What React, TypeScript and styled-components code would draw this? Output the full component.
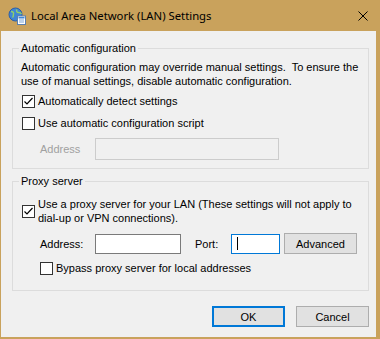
import React from 'react';
import styled, { createGlobalStyle } from 'styled-components';

const GlobalStyle = createGlobalStyle`
  html, body {
    margin: 0;
    padding: 0;
    background: #c9a25c;
  }
  body {
    font-family: "Liberation Sans", Arial, sans-serif;
    font-size: 11px;
    color: #000;
  }
`;

const Window = styled.div`
  width: 380px;
  height: 339px;
  box-sizing: border-box;
  background: #c9a25c;
  padding: 0 4px 2px 1px;
  display: flex;
  flex-direction: column;
`;

const TitleBar = styled.div`
  height: 31px;
  flex: none;
  display: flex;
  align-items: center;
  gap: 5px;
  padding: 0 8px 0 7px;
`;

const Title = styled.div`
  flex: 1;
  font-family: "Noto Sans", "Open Sans", sans-serif;
  font-size: 11.3px;
  line-height: 16px;
  margin-top: 1px;
`;

const Client = styled.div`
  flex: 1;
  background: #f0f0f0;
  padding: 9px 0 0 11px;
  display: flex;
  flex-direction: column;
`;

const GroupBox = styled.fieldset<{ $mt?: number; $pb: number }>`
  width: 357px;
  box-sizing: border-box;
  min-width: 0;
  margin: ${({ $mt }) => $mt || 0}px 0 0 0;
  border: 1px solid #dcdcdc;
  padding: 4px 8px ${({ $pb }) => $pb}px 8px;
`;

const Legend = styled.legend`
  padding: 0 2px;
  margin-left: -2px;
  line-height: 16px;
`;

const Text = styled.div<{ $lh: number }>`
  line-height: ${({ $lh }) => $lh}px;
  white-space: nowrap;
`;

const CheckRow = styled.div<{ $indent: number; $mt: number }>`
  display: flex;
  align-items: center;
  gap: 3px;
  margin: ${({ $mt }) => $mt}px 0 0 ${({ $indent }) => $indent}px;
  line-height: 16px;
`;

const Box = styled.span`
  width: 13px;
  height: 13px;
  box-sizing: border-box;
  flex: none;
  border: 1px solid #333;
  background: #fff;
  display: flex;
  align-items: center;
  justify-content: center;
`;

const FieldRow = styled.div<{ $mt: number }>`
  display: flex;
  align-items: center;
  margin: ${({ $mt }) => $mt}px 0 0 19px;
  line-height: 16px;
`;

const FieldLabel = styled.span<{ $w: number; $ml?: number; $disabled?: boolean }>`
  width: ${({ $w }) => $w}px;
  margin-left: ${({ $ml }) => $ml || 0}px;
  flex: none;
  color: ${({ $disabled }) => ($disabled ? '#a0a0a0' : '#000')};
`;

const Input = styled.div<{ $w: number; $h: number; $state?: 'disabled' | 'focus' }>`
  width: ${({ $w }) => $w}px;
  height: ${({ $h }) => $h}px;
  box-sizing: border-box;
  flex: none;
  background: ${({ $state }) => ($state === 'disabled' ? '#f0f0f0' : '#fff')};
  border: 1px solid
    ${({ $state }) => ($state === 'disabled' ? '#cccccc' : $state === 'focus' ? '#0078d7' : '#7a7a7a')};
  display: flex;
  align-items: center;
  padding-left: 5px;
`;

const Caret = styled.span`
  width: 1px;
  height: 13px;
  background: #000;
`;

const Button = styled.div<{ $default?: boolean; $ml?: number }>`
  width: 73px;
  height: 21px;
  box-sizing: border-box;
  flex: none;
  margin-left: ${({ $ml }) => $ml || 0}px;
  background: #e1e1e1;
  border: ${({ $default }) => ($default ? '2px solid #0078d7' : '1px solid #adadad')};
  display: flex;
  align-items: center;
  justify-content: center;
  line-height: 16px;
`;

const ButtonBar = styled.div`
  width: 357px;
  margin-top: 15px;
  display: flex;
  justify-content: flex-end;
  gap: 11px;
`;

function CheckMark() {
  return (
    <svg width="11" height="11" viewBox="0 0 11 11">
      <polyline points="1.5,5.5 4,8 9.5,2" fill="none" stroke="#000" strokeWidth="1.2" />
    </svg>
  );
}

function Checkbox({ checked, indent, mt, children }: {
  checked?: boolean; indent: number; mt: number; children: React.ReactNode;
}) {
  return (
    <CheckRow $indent={indent} $mt={mt}>
      <Box>{checked && <CheckMark />}</Box>
      <span>{children}</span>
    </CheckRow>
  );
}

function NetIcon() {
  return (
    <svg width="18" height="18" viewBox="0 0 18 18">
      <circle cx="7.5" cy="7.5" r="6.5" fill="#3f86d6" stroke="#2a5fa8" strokeWidth="1" />
      <path d="M3 4.5c2 0 3 1 2.5 2.5S6 9 4.5 10.5M9 2.5c-1 1.5 0 3 1.5 3S13 6 13.5 7" fill="none" stroke="#8fd06a" strokeWidth="1.4" />
      <rect x="9.5" y="9" width="8" height="8.5" fill="#fff" stroke="#5a7fae" strokeWidth="1" />
      <rect x="10.5" y="10" width="6" height="1.5" fill="#3f86d6" />
      <rect x="11" y="12.5" width="5" height="1" fill="#7aa6d8" />
      <rect x="11" y="14.5" width="5" height="1" fill="#7aa6d8" />
    </svg>
  );
}

function CloseIcon() {
  return (
    <svg width="10" height="10" viewBox="0 0 10 10">
      <path d="M0.5 0.5L9.5 9.5M9.5 0.5L0.5 9.5" stroke="#000" strokeWidth="1" />
    </svg>
  );
}

export default function App() {
  return (
    <>
      <GlobalStyle />
      <Window>
        <TitleBar>
          <NetIcon />
          <Title>Local Area Network (LAN) Settings</Title>
          <CloseIcon />
        </TitleBar>
        <Client>
          <GroupBox $pb={8}>
            <Legend>Automatic configuration</Legend>
            <Text $lh={14}>
              Automatic configuration may override manual settings.&nbsp; To ensure the
              <br />
              use of manual settings, disable automatic configuration.
            </Text>
            <Checkbox checked indent={1} mt={5}>Automatically detect settings</Checkbox>
            <Checkbox indent={1} mt={6}>Use automatic configuration script</Checkbox>
            <FieldRow $mt={7}>
              <FieldLabel $w={55} $disabled>Address</FieldLabel>
              <Input $w={184} $h={22} $state="disabled" />
            </FieldRow>
          </GroupBox>
          <GroupBox $mt={4} $pb={14}>
            <Legend>Proxy server</Legend>
            <CheckRow $indent={1} $mt={4}>
              <Box><CheckMark /></Box>
              <Text $lh={14}>
                Use a proxy server for your LAN (These settings will not apply to
                <br />
                dial-up or VPN connections).
              </Text>
            </CheckRow>
            <FieldRow $mt={8}>
              <FieldLabel $w={55}>Address:</FieldLabel>
              <Input $w={86} $h={20} />
              <FieldLabel $w={36} $ml={14}>Port:</FieldLabel>
              <Input $w={49} $h={20} $state="focus"><Caret /></Input>
              <Button $ml={4}>Advanced</Button>
            </FieldRow>
            <Checkbox indent={19} mt={6}>Bypass proxy server for local addresses</Checkbox>
          </GroupBox>
          <ButtonBar>
            <Button $default>OK</Button>
            <Button>Cancel</Button>
          </ButtonBar>
        </Client>
      </Window>
    </>
  );
}
